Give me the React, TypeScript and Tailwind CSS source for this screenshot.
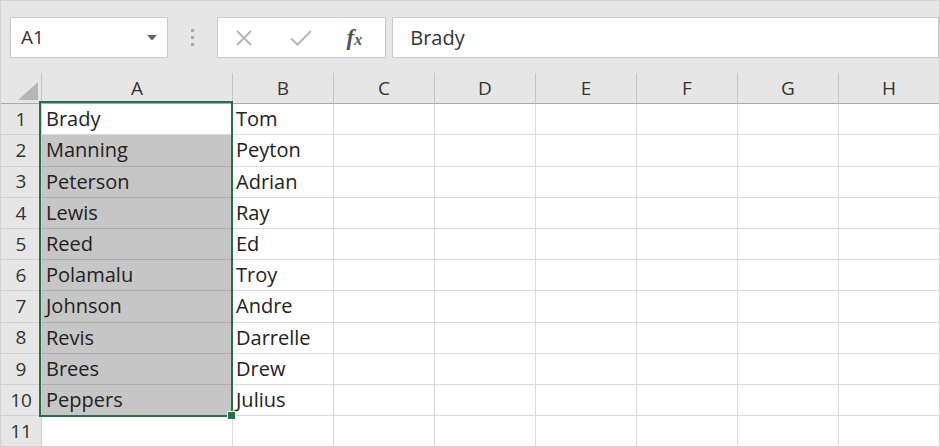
import React from "react";

const colA = ["Brady","Manning","Peterson","Lewis","Reed","Polamalu","Johnson","Revis","Brees","Peppers",""];
const colB = ["Tom","Peyton","Adrian","Ray","Ed","Troy","Andre","Darrelle","Drew","Julius",""];
const letters = ["A","B","C","D","E","F","G","H"];
const font = { fontFamily: '"Open Sans", "Noto Sans", sans-serif' };

export default function App() {
  return (
    <div className="w-[940px] h-[447px] overflow-hidden bg-[#e6e6e6] relative border border-[#d2d2d2] text-[#222]" style={font}>
      {/* toolbar */}
      <div className="h-[72px] flex items-start pt-[16px] pl-[9px]">
        <div className="w-[158px] h-[41px] bg-white border border-[#c8c8c8] flex items-center justify-between pl-[10px] pr-[10px]">
          <span className="text-[19px] text-[#333]">A1</span>
          <svg width="10" height="6" viewBox="0 0 10 6"><path d="M0 0h10L5 5.5z" fill="#666"/></svg>
        </div>
        <div className="w-[49px] h-[41px] flex flex-col items-center justify-center gap-[4px]">
          <div className="w-[3px] h-[3px] bg-[#a8a8a8]" />
          <div className="w-[3px] h-[3px] bg-[#a8a8a8]" />
          <div className="w-[3px] h-[3px] bg-[#a8a8a8]" />
        </div>
        <div className="w-[170px] h-[41px] bg-white border border-[#c8c8c8] flex items-center pl-[17px]">
          <svg width="18" height="16" viewBox="0 0 18 16"><path d="M2 1L16 15M16 1L2 15" stroke="#b4b4b4" strokeWidth="1.8"/></svg>
          <svg width="22" height="16" viewBox="0 0 22 16" className="ml-[37px]"><path d="M1 8.5L7.5 14.5L21 1" stroke="#b8b8b8" strokeWidth="2.2" fill="none"/></svg>
          <span className="ml-[35px] text-[23px] leading-none italic text-[#555] font-semibold" style={{ fontFamily: '"Liberation Serif", serif' }}>f<span className="text-[16px]">x</span></span>
        </div>
        <div className="ml-[6px] w-[548px] h-[41px] bg-white border border-[#c8c8c8] flex items-center pl-[17px]">
          <span className="text-[20px] text-[#333]">Brady</span>
        </div>
      </div>
      {/* grid */}
      <div className="grid grid-cols-[41px_191px_101px_101px_101px_101px_101px_101px_101px] auto-rows-[31.2px]">
        <div className="h-[31px] bg-[#e6e6e6] border-b border-[#ababab] border-r border-r-[#c4c4c4] relative">
          <svg width="20" height="18" viewBox="0 0 20 18" className="absolute left-[17px] top-[9px]"><path d="M20 0V18H0z" fill="#b6b6b6"/></svg>
        </div>
        {letters.map((l) => (
          <div key={l} className="h-[31px] bg-[#e6e6e6] border-b border-[#ababab] border-r border-r-[#c4c4c4] flex items-center justify-center text-[19px] text-[#333]">{l}</div>
        ))}
        {colA.map((a, i) => (
          <React.Fragment key={i}>
            <div className="bg-[#e6e6e6] border-b border-r border-[#cfcfcf] flex items-center justify-center text-[19px] text-[#333]">{i + 1}</div>
            <div className={`border-b border-r flex items-center pl-[4px] text-[20px] ${i >= 1 && i <= 9 ? "bg-[#c6c6c6] border-[#aeaeae]" : "bg-white border-[#dadada]"}`}>{a}</div>
            <div className="bg-white border-b border-r border-[#dadada] flex items-center pl-[3px] text-[20px]">{colB[i]}</div>
            {[0,1,2,3,4,5].map((k) => (
              <div key={k} className="bg-white border-b border-r border-[#dadada]" />
            ))}
          </React.Fragment>
        ))}
      </div>
      {/* selection */}
      <div className="absolute left-[38px] top-[100px] w-[194px] h-[316px] border-2 border-[#217346] pointer-events-none" />
      <div className="absolute left-[226px] top-[410px] w-[9px] h-[9px] bg-[#217346] border border-white" />
    </div>
  );
}
